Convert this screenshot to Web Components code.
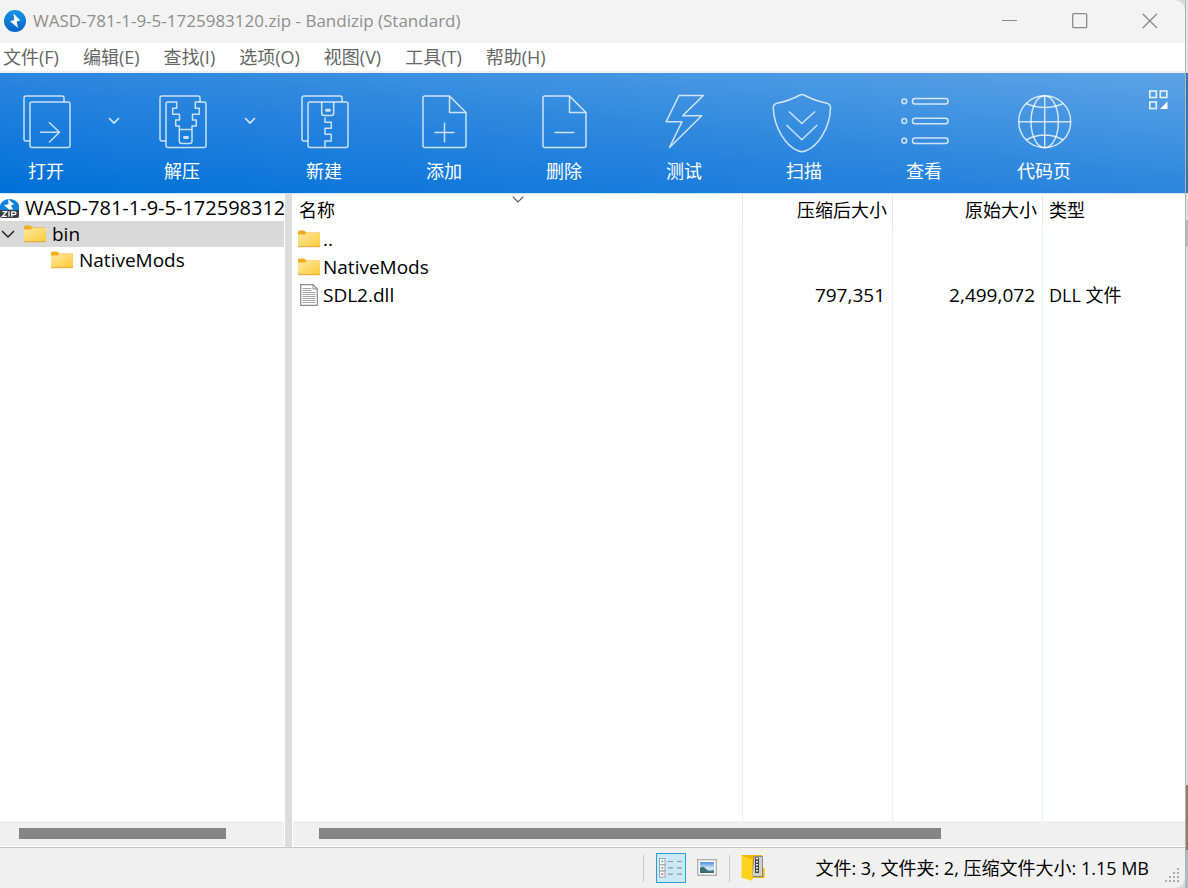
<!DOCTYPE html>
<html lang="zh-CN">
<head>
<meta charset="utf-8">
<title>WASD-781-1-9-5-1725983120.zip - Bandizip (Standard)</title>
<style>
  html, body { height: 100%; margin: 0; }
  body { font: 18px/24px "Open Sans", "Noto Sans CJK SC", sans-serif; color: #000; overflow: hidden; }
</style>
</head>
<body>
<bz-window></bz-window>

<script>
const define = (name, css, html, setup) => {
  const template = document.createElement('template');
  template.innerHTML = `<style>*{box-sizing:border-box}button{font:inherit;color:inherit;background:none;border:0;padding:0;margin:0}${css}</style>${html}`;
  customElements.define(name, class extends HTMLElement {
    constructor() {
      super();
      this.attachShadow({ mode: 'open' }).append(template.content.cloneNode(true));
    }
    connectedCallback() { if (setup) setup(this, this.shadowRoot); }
  });
};

/* ---------- icons ---------- */
const backSheet = '<path d="M7 46H3a2 2 0 0 1-2-2V3a2 2 0 0 1 2-2H39a2 2 0 0 1 2 2V7"/>';
const page = '<path d="M27.500 1H3a2 2 0 0 0-2 2V50.500a2 2 0 0 0 2 2H42a2 2 0 0 0 2-2V17.500L27.500 1V17.500H44"/>';
const tool = (x, y, body) => ['0 0 64 64', `<g transform="translate(${x} ${y})" fill="none" stroke="#fff" stroke-opacity=".76" stroke-width="1.500" stroke-linejoin="round">${body}</g>`];
const icons = {
  open: tool(9, 5, backSheet + '<rect x="7" y="7" width="40" height="45.500" rx="2"/><path d="M17 37.300H36.500M26 27.200L36.500 37.300L26 47.500"/>'),
  extract: tool(9, 5, backSheet + '<path d="M17.700 7H9a2 2 0 0 0-2 2V50.500a2 2 0 0 0 2 2H45a2 2 0 0 0 2-2V9a2 2 0 0 0-2-2H36.300V13.300H40.300V19.300H33.500V25H37.300V31H33V34.500V46a2.500 2.500 0 0 1-2.500 2.500H22.800a2.500 2.500 0 0 1-2.500-2.500V34.500V31H16.700V25H20.500V19.300H13.700V13.300H17.700zM20.300 34.500H33"/><rect x="25" y="41.700" width="4" height="1.600"/>'),
  'new': tool(9, 5, backSheet + '<rect x="7" y="7" width="40" height="45.500" rx="2"/><path d="M20.700 7V18a2.500 2.500 0 0 0 2.500 2.500H30.200a2.500 2.500 0 0 0 2.500-2.500V7M24 22.500V27.300H30.300V33.300H24V39.300H30.300V46H24V52"/><rect x="25" y="14.500" width="4" height="1.600"/>'),
  add: tool(10, 5, page + '<path d="M12.500 37.500H32.500M22.500 27.500V47.500"/>'),
  remove: tool(10, 5, page + '<path d="M12.500 37.500H32.500"/>'),
  test: tool(0, 0, '<path d="M27 5.500H51.300L30.700 25.700H49.700L17.500 57.500L30 31.700H14.200z"/>'),
  scan: tool(0, 0, '<path d="M28 5Q30 4 32 5Q42 10.500 54 13Q58.700 14 58.500 18C58 38 46 56 34 60.800Q30 62.500 26 60.800C14 56 2 38 1.300 18Q1 14 6 13Q18 10.500 28 5z"/><path d="M17 21.500L29.800 33.500L43 21.500M14.500 35L29.800 49.700L45.300 35"/>'),
  view: tool(0, 0, [11.3, 31, 50.7].map(y => `<circle cx="12.300" cy="${y}" r="2.400"/><rect x="20.500" y="${y - 2.7}" width="35.500" height="5.400" rx="2.500"/>`).join('')),
  codepage: tool(0, 0, '<circle cx="32.700" cy="31.700" r="26"/><ellipse cx="32.700" cy="31.700" rx="13.700" ry="26"/><path d="M32.700 5.700V57.700M6.700 31.700H58.700M14 13.500Q32.700 21.500 51.400 13.500M14 50Q32.700 40 51.400 50"/>'),
  down: ['0 0 12 8', '<path d="M1 1L6 6L11 1" fill="none" stroke="#fff" stroke-opacity=".8" stroke-width="1.700"/>'],
  chevron: ['0 0 14 8', '<path d="M1 1L7 7L13 1" fill="none" stroke="currentColor" stroke-width="1.500"/>'],
  sort: ['0 0 12 7', '<path d="M.7 .7L6 6L11.300 .7" fill="none" stroke="currentColor" stroke-width="1.200"/>'],
  layout: ['0 0 20 20', '<g fill="none" stroke="#fff" stroke-opacity=".85" stroke-width="1.600"><rect x="1.800" y="1" width="6.500" height="6.500"/><rect x="12.300" y="1" width="6.500" height="6.500"/><rect x="1.800" y="12" width="6.500" height="6.500"/></g><path d="M19.500 11.500V19H12z" fill="#fff"/>'],
  minimize: ['0 0 16 16', '<path d="M0 7.500H15" stroke="#8a8a8a" fill="none"/>'],
  maximize: ['0 0 16 16', '<rect x=".7" y=".7" width="14" height="14" rx="1" stroke="#8a8a8a" stroke-width="1.300" fill="none"/>'],
  close: ['0 0 16 16', '<path d="M.7 .7L15 15M15 .7L.7 15" stroke="#8a8a8a" stroke-width="1.300" fill="none"/>'],
  app: ['0 0 22 22', '<defs><linearGradient id="a" x1="0" y1="0" x2="0" y2="1"><stop stop-color="#1594e4"/><stop offset="1" stop-color="#0763c8"/></linearGradient></defs><circle cx="11" cy="11" r="11" fill="url(#a)"/><path d="M9.500 3.500L16.200 10.300L12.700 11.500L14 18L6 11.300L10.200 10z" fill="#fff"/>'],
  zip: ['0 0 19 24', '<path d="M0 14V9.500A10 9.500 0 0 1 19 9.500V14z" fill="#0a83dc"/><path d="M8 3L14 8.200L11 9.500L13 13.500H9L4 9.200L8.500 8z" fill="#fff"/><path d="M0 14H19V20a2 2 0 0 1-2 2H2a2 2 0 0 1-2-2z" fill="#393f45"/><path d="M2.500 15.700H6.500L2.500 20.300H6.800M9 15.300V20.800M11.800 20.800V15.800H14.500a1.300 1.300 0 0 1 0 2.800H11.800" fill="none" stroke="#fff" stroke-width="1.300"/>'],
  folder: ['0 0 22 18', '<defs><linearGradient id="f" x1="0" y1="0" x2="1" y2="1"><stop stop-color="#ffe9a0"/><stop offset="1" stop-color="#fdc937"/></linearGradient></defs><path d="M0 2a1.500 1.500 0 0 1 1.500-1.500H6L8.500 2.500H22V7H0z" fill="#f0ad1c"/><path d="M0 4.500H7L8.500 3H22V16.500H0z" fill="url(#f)"/><path d="M0 16.200H22V17.200H0z" fill="#e4a52a"/>'],
  file: ['0 0 18 22', '<path d="M.7 .7H13L17.300 5V21.300H.7z" fill="#fff" stroke="#8b8b8b" stroke-width="1.200"/><path d="M13 .7V5H17.300" fill="none" stroke="#8b8b8b"/><path d="M2.500 4.500H11M2.500 6.500H11M2.500 8.500H15.500M2.500 10.500H15.500M2.500 12.500H15.500M2.500 14.500H15.500M2.500 16.500H15.500M2.500 18.500H15.500" stroke="#a5a5a5"/>'],
  details: ['0 0 24 20', ['#72b58c', '#6fa3d8', '#d9776b'].map((c, i) => `<rect x=".5" y="${.5 + i * 6.3}" width="5.500" height="6" fill="#fff" stroke="#9aa4aa"/><rect x="2.300" y="${2.5 + i * 6.3}" width="2" height="2" fill="${c}"/><path d="M9 ${3.5 + i * 6.3}H14M18 ${3.5 + i * 6.3}H23" stroke="#8b979d" stroke-width="1.200"/>`).join('')],
  picture: ['0 0 20 18', '<defs><linearGradient id="p" x1="0" y1="0" x2="0" y2="1"><stop stop-color="#4b94e0"/><stop offset=".6" stop-color="#dcecfa"/><stop offset="1" stop-color="#4f7f9a"/></linearGradient></defs><rect x=".7" y=".7" width="18.600" height="15.600" fill="#fff" stroke="#b0b0b0" stroke-width="1.400"/><rect x="3" y="3" width="14" height="11" fill="url(#p)"/><path d="M3 9Q6 6 9 10T17 11V14H3z" fill="#3e6f78"/>'],
  archive: ['0 0 24 26', '<path d="M1 0H21V13H23.500V23H1z" fill="#f5b400"/><path d="M13 1.500H21.500V21.500H11z" fill="#d0d0d0" stroke="#777" stroke-width=".8"/><path d="M14 2.500H18V18H14z" fill="#444"/><path d="M16 3V17" stroke="#eee" stroke-width="2" stroke-dasharray="1.500 1.500"/><path d="M.5 .5L11.500 4.500V26L.5 22.500z" fill="#ffd21c"/>'],
  grip: ['0 0 16 16', [0, 1, 2, 3].flatMap(r => [0, 1, 2, 3].filter(c => c + r >= 3).map(c => `<rect x="${c * 4}" y="${r * 4}" width="2" height="2" fill="#ababab"/>`)).join('')]
};
define('bz-icon', ':host{display:block;flex:none}svg{display:block;overflow:visible}', '<svg aria-hidden="true"></svg>', (host, root) => {
  const [box, body] = icons[host.getAttribute('name')];
  const size = box.split(' ');
  const svg = root.querySelector('svg');
  svg.setAttribute('viewBox', box);
  svg.setAttribute('width', size[2]);
  svg.setAttribute('height', size[3]);
  svg.innerHTML = body;
});

/* ---------- title bar and menu ---------- */
define('bz-titlebar', `
  :host{display:flex;align-items:center;height:43px;background:#f3f3f3;color:#8e8e8e;font-size:17px;padding-left:4px;gap:7px}
  .title{flex:1;min-width:0;white-space:nowrap;overflow:hidden}
  .controls{display:flex;align-self:stretch}
  button{width:70px;display:grid;place-items:center}
  .app,.title,button{padding-bottom:2px}`,
  `<bz-icon class="app" name="app"></bz-icon><span class="title"><slot></slot></span>
   <div class="controls"><button aria-label="最小化"><bz-icon name="minimize"></bz-icon></button><button aria-label="最大化"><bz-icon name="maximize"></bz-icon></button><button aria-label="关闭"><bz-icon name="close"></bz-icon></button></div>`);

define('bz-menubar', `
  :host{display:block;color:#666;border-bottom:2px solid #f0f0f0;background:#fff}
  nav{display:flex;gap:24px;padding:2px 3px}
  button{white-space:nowrap}`,
  '<nav>' + ['文件(F)', '编辑(E)', '查找(I)', '选项(O)', '视图(V)', '工具(T)', '帮助(H)'].map(t => `<button>${t}</button>`).join('') + '</nav>');

/* ---------- toolbar ---------- */
define('bz-tool', `
  :host{display:flex;align-items:flex-start}
  .main{width:104px;display:flex;flex-direction:column;align-items:center;gap:5px}
  .more{display:none;width:44px;height:62px;place-items:center}
  :host([split]) .main{width:92px}
  :host([split]) .more{display:grid}`,
  `<button class="main"><slot></slot></button><button class="more" aria-label="更多"><bz-icon name="down"></bz-icon></button>`,
  (host, root) => {
    const icon = document.createElement('bz-icon');
    icon.setAttribute('name', host.getAttribute('icon'));
    root.querySelector('.main').prepend(icon);
    if (!host.hasAttribute('split')) root.querySelector('.more').remove();
  });

define('bz-toolbar', `
  :host{display:flex;justify-content:space-between;align-items:flex-start;height:121px;padding-top:17px;color:#fff;border-bottom:1px solid #d9e3ee;
    background:linear-gradient(to top right,#0070d8,#2b86de 50%,#5ca3e5)}
  .split,.single{display:flex}
  .single{gap:16px}
  .layout{margin-right:17px}`,
  `<div class="split">
     <bz-tool split icon="open">打开</bz-tool><bz-tool split icon="extract">解压</bz-tool>
     <div class="single"><bz-tool icon="new">新建</bz-tool><bz-tool icon="add">添加</bz-tool><bz-tool icon="remove">删除</bz-tool><bz-tool icon="test">测试</bz-tool><bz-tool icon="scan">扫描</bz-tool><bz-tool icon="view">查看</bz-tool><bz-tool icon="codepage">代码页</bz-tool></div>
   </div>
   <button class="layout" aria-label="布局"><bz-icon name="layout"></bz-icon></button>`);

/* ---------- panes ---------- */
define('bz-scrollbar', `
  :host{display:block;height:26px;padding:7px 19px;background:#f0f0f0;border-bottom:1px solid #fff}
  :host([wide]){padding:7px 26px}
  div{width:84%;height:11px;background:#858585}
  :host([wide]) div{width:74%}`, '<div></div>');

define('bz-tree', `
  :host{display:flex;flex-direction:column;justify-content:space-between;width:285px;flex:none;background:#fff;border-right:1px solid #fff;font-size:19px;overflow:hidden}
  ul{list-style:none;margin:0;padding:0}
  .tree{padding-top:1px}
  .row{display:flex;align-items:center;height:26px;white-space:nowrap}
  .root{gap:6px;font-size:20px}
  .sel{background:#d9d9d9}
  .sel button{width:24px;padding-left:1px;color:#222}
  .sel span{padding-left:6px}
  .leaf{padding-left:51px;gap:6px}`,
  `<ul class="tree" role="tree"><li role="treeitem" aria-expanded="true"><div class="row root"><bz-icon name="zip"></bz-icon><span>WASD-781-1-9-5-172598312</span></div>
     <ul role="group"><li role="treeitem" aria-expanded="true" aria-selected="true"><div class="row sel"><button aria-label="折叠"><bz-icon name="chevron"></bz-icon></button><bz-icon name="folder"></bz-icon><span>bin</span></div>
       <ul role="group"><li role="treeitem"><div class="row leaf"><bz-icon name="folder"></bz-icon><span>NativeMods</span></div></li></ul></li></ul></li></ul>
   <bz-scrollbar></bz-scrollbar>`);

define('bz-file-list', `
  :host{display:flex;flex-direction:column;flex:1;min-width:0;background:#fff;padding-left:1px}
  .view{flex:1;min-height:0;padding-top:1px}
  table{width:100%;height:100%;border-collapse:separate;border-spacing:0;table-layout:fixed;font-size:19px}
  .num{width:150px}.type{width:142px}
  tr{height:28px}
  thead tr{height:30px}
  th,td{padding:0 7px 0 6px;text-align:left;font-weight:400;white-space:nowrap;border-right:1px solid #e6f0fb}
  th{position:relative;font-size:18px;border-right-color:#e5e5e5}
  th:last-child,td:last-child{border-right:0;font-size:18px}
  th.num,td.num{text-align:right}
  th.num{padding-right:5px}
  td:first-child{padding-left:5px}
  .name{display:flex;align-items:center;gap:3px}
  .pad{margin:0 2px}
  .sort{position:absolute;top:1px;left:50%;margin-left:-6px;color:#555}
  .fill{height:auto}`,
  `<div class="view"><table>
    <thead><tr><th aria-sort="descending">名称<bz-icon class="sort" name="sort"></bz-icon></th><th class="num">压缩后大小</th><th class="num">原始大小</th><th class="type">类型</th></tr></thead>
    <tbody>
     <tr><td><span class="name"><bz-icon name="folder"></bz-icon>..</span></td><td></td><td></td><td></td></tr>
     <tr><td><span class="name"><bz-icon name="folder"></bz-icon>NativeMods</span></td><td></td><td></td><td></td></tr>
     <tr><td><span class="name"><bz-icon class="pad" name="file"></bz-icon>SDL2.dll</span></td><td class="num">797,351</td><td class="num">2,499,072</td><td>DLL 文件</td></tr>
     <tr class="fill"><td></td><td></td><td></td><td></td></tr>
    </tbody></table></div>
   <bz-scrollbar wide></bz-scrollbar>`);

define('bz-statusbar', `
  :host{display:flex;align-items:center;justify-content:flex-end;height:41px;flex:none;background:#f0f0f0;border-top:1px solid #c6c6c6}
  .sep{width:1px;height:27px;background:#c9c9c9}
  .on{width:30px;height:30px;margin:0 11px 0 12px;display:grid;place-items:center;background:#cbe8f6;border:1px solid #26a0da}
  .pic{margin-right:12px}
  .arc{margin:0 50px 0 11px}
  .text{white-space:nowrap}
  .grip{align-self:flex-end;margin:0 4px 4px 16px}`,
  `<i class="sep"></i><button class="on" aria-label="详细信息"><bz-icon name="details"></bz-icon></button><button class="pic" aria-label="预览"><bz-icon name="picture"></bz-icon></button><i class="sep"></i><button class="arc" aria-label="压缩包"><bz-icon name="archive"></bz-icon></button><span class="text"><slot></slot></span><bz-icon class="grip" name="grip"></bz-icon>`);

define('bz-window', `
  :host{display:grid;grid-template-columns:minmax(0,1fr) 3px;height:100vh;background:#d8d8d8}
  .frame{display:flex;flex-direction:column;min-width:0;border-radius:0 10px 10px 0;overflow:hidden}
  .panes{display:flex;flex:1;min-height:0}
  .splitter{width:7px;flex:none;background:#dcdcdc}
  .behind{border-left:1px solid #b4b4b4;background:linear-gradient(#e4e4e4 73px,#3673ac 73px 193px,#e0e0e0 193px 220px,#b8b8b8 220px 247px,#dedede 247px 785px,#8f7c6b 785px 850px,#a9bcc6 850px)}`,
  `<div class="frame">
     <bz-titlebar>WASD-781-1-9-5-1725983120.zip - Bandizip (Standard)</bz-titlebar>
     <bz-menubar></bz-menubar>
     <bz-toolbar></bz-toolbar>
     <div class="panes"><bz-tree></bz-tree><div class="splitter"></div><bz-file-list></bz-file-list></div>
     <bz-statusbar>文件: 3, 文件夹: 2, 压缩文件大小: 1.15 MB</bz-statusbar>
   </div><div class="behind"></div>`);
</script>
</body>
</html>
